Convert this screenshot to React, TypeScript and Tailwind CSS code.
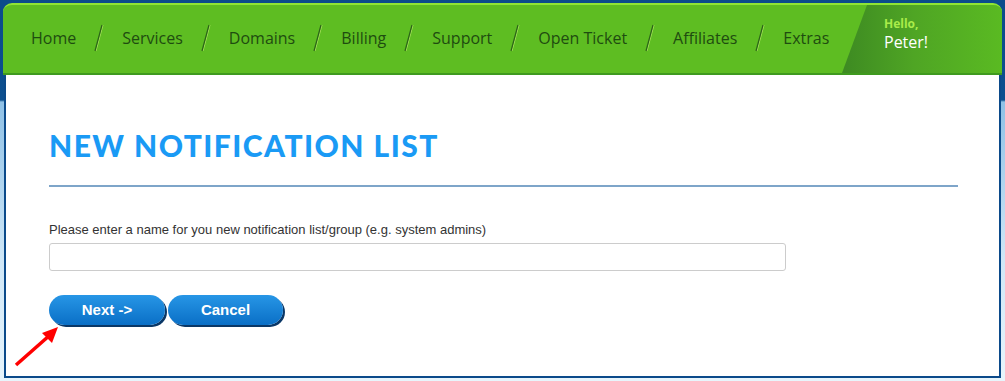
import React from "react";

const navItems = [
  "Home",
  "Services",
  "Domains",
  "Billing",
  "Support",
  "Open Ticket",
  "Affiliates",
  "Extras",
];

function Slash() {
  return (
    <svg width="10" height="28" viewBox="0 0 10 28" className="mx-[18px] shrink-0">
      <line x1="9" y1="1" x2="2" y2="27" stroke="#a6e25a" strokeWidth="1" />
      <line x1="8" y1="1" x2="1" y2="27" stroke="#2b6418" strokeWidth="1.2" />
    </svg>
  );
}

export default function App() {
  return (
    <div className="w-[1005px] h-[381px] overflow-hidden bg-[linear-gradient(to_bottom,#0b4c8b_0px,#0c4f8f_100px,#8fc1e6_102px,#cfe7f7_260px,#e8f5fc_381px)] px-[3px] pt-[3px] font-['Liberation_Sans',Arial,sans-serif]">
      {/* Top nav */}
      <div className="relative flex h-[72px] items-center overflow-hidden rounded-t-[9px] border-t-2 border-[#8fe534] border-b-2 border-b-[#3f9a1f] bg-[#5ebd22]">
        <div className="flex items-center pl-[28px] pb-[2px] font-['Open_Sans',sans-serif] text-[16px] text-[#1e4c10]">
          {navItems.map((item, i) => (
            <React.Fragment key={item}>
              <span className="whitespace-nowrap tracking-[0px]">{item}</span>
              {i < navItems.length - 1 && <Slash />}
            </React.Fragment>
          ))}
        </div>
        <div className="absolute right-0 top-0 bottom-0 w-[160px] bg-[linear-gradient(to_right,#3d8a22,#4fa524_45%,#5aba22)] [clip-path:polygon(25px_0,100%_0,100%_100%,0_100%)]">
          <div className="pl-[42px] pt-[13px] font-['Open_Sans',sans-serif] leading-none">
            <div className="text-[12px] font-bold text-[#a9ec4a]">Hello,</div>
            <div className="mt-[4px] text-[16px] text-white">Peter!</div>
          </div>
        </div>
      </div>

      {/* Content panel */}
      <div className="mx-[1px] h-[303px] border-x-2 border-b-2 border-[#0b4a8a] border-t-0 bg-white px-[43px] pt-[55px]">
        <h1 className="font-['Lato',sans-serif] text-[30px] font-black leading-none tracking-[1.45px] text-[#1a9af5]">
          NEW NOTIFICATION LIST
        </h1>
        <div className="mt-[25px] h-[2px] w-[909px] bg-[#7ea5c9]" />
        <p className="mt-[36px] text-[13px] leading-none text-[#333]">
          Please enter a name for you new notification list/group (e.g. system admins)
        </p>
        <input
          type="text"
          className="mt-[7px] block h-[28px] w-[737px] rounded-[3px] border border-[#cccccc] bg-white outline-none"
        />
        <div className="mt-[24px] flex gap-[3px]">
          <button className="h-[30px] w-[116px] rounded-full bg-[linear-gradient(to_bottom,#2796e6,#0a6fc6)] text-[15px] font-bold text-white shadow-[2px_2px_0_#0a3766]">
            Next -&gt;
          </button>
          <button className="h-[30px] w-[115px] rounded-full bg-[linear-gradient(to_bottom,#2796e6,#0a6fc6)] text-[15px] font-bold text-white shadow-[2px_2px_0_#0a3766]">
            Cancel
          </button>
        </div>
      </div>

      {/* Red arrow annotation */}
      <svg className="absolute left-[12px] top-[322px]" width="52" height="48" viewBox="0 0 52 48">
        <line x1="4" y1="43" x2="38" y2="13" stroke="#f00" strokeWidth="3.5" />
        <polygon points="46,5 30,11 40,21" fill="#f00" />
      </svg>
    </div>
  );
}
